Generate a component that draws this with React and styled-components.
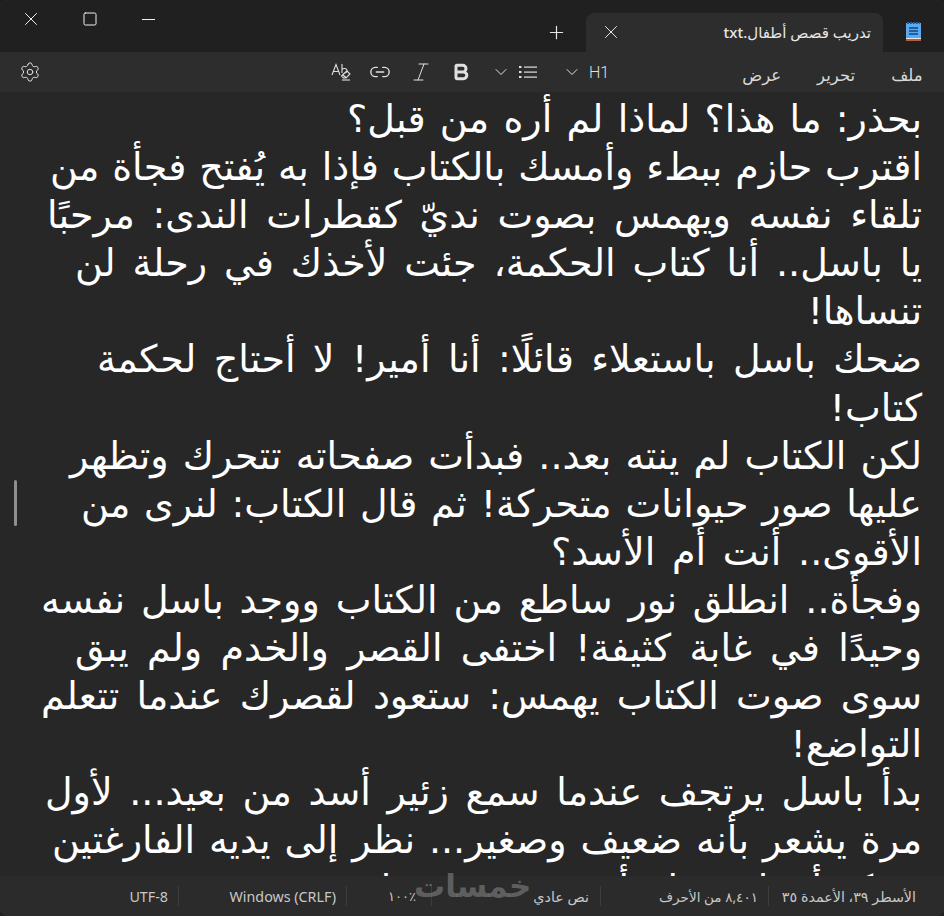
import React from "react";
import styled, { createGlobalStyle } from "styled-components";
import { X, Square, Minus, Plus, Settings, Link2, Italic, Bold, ChevronDown } from "lucide-react";

const GlobalStyle = createGlobalStyle`
  html, body {
    margin: 0;
    padding: 0;
    height: 100%;
    background: #1f1f1f;
    overflow: hidden;
  }
`;

const Window = styled.div`
  position: relative;
  width: 944px;
  height: 916px;
  display: flex;
  flex-direction: column;
  background: #272727;
  border-radius: 8px;
  overflow: hidden;
  box-shadow: inset 0 0 0 1px #383838;
  font-family: "Noto Sans", "DejaVu Sans", sans-serif;
  color: #d6d6d6;
`;

const TitleBar = styled.div`
  height: 52px;
  flex: none;
  display: flex;
  direction: ltr;
  background: #202020;
`;

const WindowButtons = styled.div`
  display: flex;
  padding-top: 4px;
  flex: 1;
  color: #f0f0f0;
`;

const WindowButton = styled.div`
  width: 58px;
  height: 30px;
  display: flex;
  align-items: center;
  justify-content: center;
  &:first-child {
    width: 61px;
  }
`;

const NewTab = styled.div`
  width: 56px;
  display: flex;
  align-items: center;
  justify-content: center;
  padding: 13px 4px 0 0;
  box-sizing: border-box;
  color: #e6e6e6;
`;

const Tab = styled.div`
  width: 297px;
  margin-top: 13px;
  background: #2d2d2d;
  border-radius: 8px 8px 0 0;
  display: flex;
  align-items: center;
  padding: 0 12px 1px 14px;
  box-sizing: border-box;
  justify-content: space-between;
  color: #e6e6e6;
`;

const TabTitle = styled.span`
  direction: rtl;
  font-size: 15px;
  font-weight: 500;
  color: #e8e8e8;
`;

const AppIcon = styled.div`
  width: 61px;
  display: flex;
  align-items: center;
  justify-content: center;
  padding: 10px 1px 0 0;
  box-sizing: border-box;
`;

const Toolbar = styled.div`
  height: 40px;
  flex: none;
  display: flex;
  align-items: center;
  direction: ltr;
  background: #2d2d2d;
  padding: 0 19px;
  color: #e0e0e0;
`;

const ToolGroup = styled.div`
  display: flex;
  align-items: center;
  margin-left: ${(p) => p.$left || 0}px;
  gap: ${(p) => p.$gap || 0}px;
`;

const MenuItem = styled.span`
  font-size: 16.5px;
  direction: rtl;
  color: #d8d8d8;
  margin-left: ${(p) => p.$left || 0}px;
  padding-top: 5px;
`;

const H1Label = styled.span`
  font-family: Roboto, sans-serif;
  font-size: 16px;
  font-weight: 300;
  color: #e0e0e0;
`;

const Editor = styled.div`
  flex: 1;
  min-height: 0;
  overflow: hidden;
  background: #272727;
  direction: rtl;
  padding: 3px 22px 0 0;
  font-family: "DejaVu Sans", sans-serif;
  font-size: 38px;
  line-height: 48.1px;
  color: #ffffff;
`;

/* each wrapped row is stretched to the left edge it has in the editor */
const Row = styled.div`
  white-space: nowrap;
  padding-left: ${(p) => p.$left || 0}px;
  text-align: justify;
  text-align-last: ${(p) => (p.$left ? "justify" : "start")};
`;

const Grip = styled.div`
  position: absolute;
  left: 14px;
  top: 480px;
  width: 3px;
  height: 46px;
  background: #8f8f8f;
  border-radius: 2px;
`;

const StatusBar = styled.div`
  position: relative;
  z-index: 1;
  height: 40px;
  flex: none;
  display: flex;
  align-items: center;
  direction: rtl;
  background: #2b2b2b;
  padding: 0 28px 0 0;
  font-size: 14.3px;
  color: #c8c8c8;
`;

const StatusCell = styled.div`
  width: ${(p) => p.$width}px;
  flex: none;
  height: 20px;
  display: flex;
  align-items: center;
  border-left: 1px solid #3d3d3d;
  direction: rtl;
  padding-right: ${(p) => p.$pad ?? 10}px;
  box-sizing: border-box;
  white-space: nowrap;
  &:last-child {
    border-left: none;
  }
`;

const LatinText = styled.span`
  direction: ltr;
`;

const SmallArabic = styled.span`
  font-size: 13.6px;
`;

const Percent = styled.span`
  direction: ltr;
  unicode-bidi: isolate;
  font-size: 13px;
`;

const Watermark = styled.div`
  position: absolute;
  z-index: 2;
  left: 414px;
  top: 864px;
  direction: rtl;
  font-family: "DejaVu Sans", sans-serif;
  font-size: 31px;
  font-weight: 700;
  line-height: 44px;
  color: rgba(130, 130, 130, 0.6);
  pointer-events: none;
`;

const NotepadIcon = () => (
  <svg width="15" height="19" viewBox="0 0 15 19" shapeRendering="crispEdges">
    <rect x="0" y="1" width="15" height="16" fill="#5ba9ee" />
    <path d="M2 0v2M5 0v2M8 0v2M11 0v2M13.500 0v2" stroke="#1f5f9e" strokeWidth="1.500" />
    <rect x="0" y="16" width="15" height="1" fill="#dfe6ee" />
    <rect x="0" y="17" width="15" height="2" fill="#b0603a" />
    <path d="M3 6h9M3 9h9M3 12h9" stroke="#1f5f9e" strokeWidth="1.500" />
  </svg>
);

const EraserAb = () => (
  <svg width="20" height="20" viewBox="0 0 20 20" fill="none" stroke="currentColor" strokeWidth="1.1">
    <path d="M1 13 L5 2.500 L9 13 M2.500 9.500h5" />
    <path d="M11 2v9 M11 7.500c1-1.500 5-1.500 5 1 0 1.200-.8 2-1.800 2.400" />
    <path d="M13 11.500l3-2.500 3 3-4 4h-2.500l-2-2z M12 13l3.500 3" />
    <path d="M11 18h8" />
  </svg>
);

const ListIcon = () => (
  <svg width="18" height="14" viewBox="0 0 18 14" fill="currentColor">
    <rect x="0" y="1" width="2.500" height="2" />
    <rect x="0" y="6" width="2.500" height="2" />
    <rect x="0" y="11" width="2.500" height="2" />
    <rect x="5" y="1.500" width="13" height="1.200" />
    <rect x="5" y="6.500" width="13" height="1.200" />
    <rect x="5" y="11.500" width="13" height="1.200" />
  </svg>
);

const rows = [
  { text: "بحذر: ما هذا؟ لماذا لم أره من قبل؟", left: 347 },
  { text: "اقترب حازم ببطء وأمسك بالكتاب فإذا به يُفتح فجأة من", left: 50 },
  { text: "تلقاء نفسه ويهمس بصوت نديّ كقطرات الندى: مرحبًا", left: 47 },
  { text: "يا باسل.. أنا كتاب الحكمة، جئت لأخذك في رحلة لن", left: 75 },
  { text: "تنساها!" },
  { text: "ضحك باسل باستعلاء قائلًا: أنا أمير! لا أحتاج لحكمة", left: 97 },
  { text: "كتاب!" },
  { text: "لكن الكتاب لم ينته بعد.. فبدأت صفحاته تتحرك وتظهر", left: 70 },
  { text: "عليها صور حيوانات متحركة! ثم قال الكتاب: لنرى من", left: 81 },
  { text: "الأقوى.. أنت أم الأسد؟", left: 551 },
  { text: "وفجأة.. انطلق نور ساطع من الكتاب ووجد باسل نفسه", left: 41 },
  { text: "وحيدًا في غابة كثيفة! اختفى القصر والخدم ولم يبق", left: 75 },
  { text: "سوى صوت الكتاب يهمس: ستعود لقصرك عندما تتعلم", left: 41 },
  { text: "التواضع!" },
  { text: "بدأ باسل يرتجف عندما سمع زئير أسد من بعيد... لأول", left: 45 },
  { text: "مرة يشعر بأنه ضعيف وصغير... نظر إلى يديه الفارغتين", left: 52 },
  { text: "وتذكر أنه لم يتعلم أي شيء من قبل" },
];

export default function App() {
  return (
    <>
      <GlobalStyle />
      <Window>
        <TitleBar>
          <WindowButtons>
            <WindowButton><X size={22} strokeWidth={1} absoluteStrokeWidth /></WindowButton>
            <WindowButton><Square size={16} strokeWidth={1} absoluteStrokeWidth /></WindowButton>
            <WindowButton><Minus size={21} strokeWidth={1} absoluteStrokeWidth /></WindowButton>
          </WindowButtons>
          <NewTab><Plus size={21} strokeWidth={1.2} absoluteStrokeWidth /></NewTab>
          <Tab>
            <X size={22} strokeWidth={1} absoluteStrokeWidth />
            <TabTitle>تدريب قصص أطفال.txt</TabTitle>
          </Tab>
          <AppIcon><NotepadIcon /></AppIcon>
        </TitleBar>
        <Toolbar>
          <Settings size={22} strokeWidth={1} absoluteStrokeWidth />
          <ToolGroup $left={290} $gap={18}>
            <EraserAb />
            <Link2 size={22} strokeWidth={1.4} absoluteStrokeWidth />
            <Italic size={24} strokeWidth={1} absoluteStrokeWidth />
            <Bold size={20} strokeWidth={3} absoluteStrokeWidth />
          </ToolGroup>
          <ToolGroup $left={20} $gap={8}>
            <ChevronDown size={20} strokeWidth={1} absoluteStrokeWidth />
            <ListIcon />
          </ToolGroup>
          <ToolGroup $left={25} $gap={7}>
            <ChevronDown size={20} strokeWidth={1} absoluteStrokeWidth />
            <H1Label>H1</H1Label>
          </ToolGroup>
          <MenuItem $left={133}>عرض</MenuItem>
          <MenuItem $left={36}>تحرير</MenuItem>
          <MenuItem $left={36}>ملف</MenuItem>
        </Toolbar>
        <Editor>
          {rows.map((r) => (
            <Row key={r.text} $left={r.left}>{r.text}</Row>
          ))}
        </Editor>
        <StatusBar>
          <StatusCell $width={148} $pad={0}>الأسطر ٣٩، الأعمدة ٣٥</StatusCell>
          <StatusCell $width={168}><SmallArabic>٨,٤٠١ من الأحرف</SmallArabic></StatusCell>
          <StatusCell $width={169} $pad={11}>نص عادي</StatusCell>
          <StatusCell $width={85} $pad={15}><Percent>١٠٠٪</Percent></StatusCell>
          <StatusCell $width={168}><LatinText>Windows (CRLF)</LatinText></StatusCell>
          <StatusCell $width={128}><LatinText>UTF-8</LatinText></StatusCell>
        </StatusBar>
        <Grip />
        <Watermark>خمسات</Watermark>
      </Window>
    </>
  );
}
